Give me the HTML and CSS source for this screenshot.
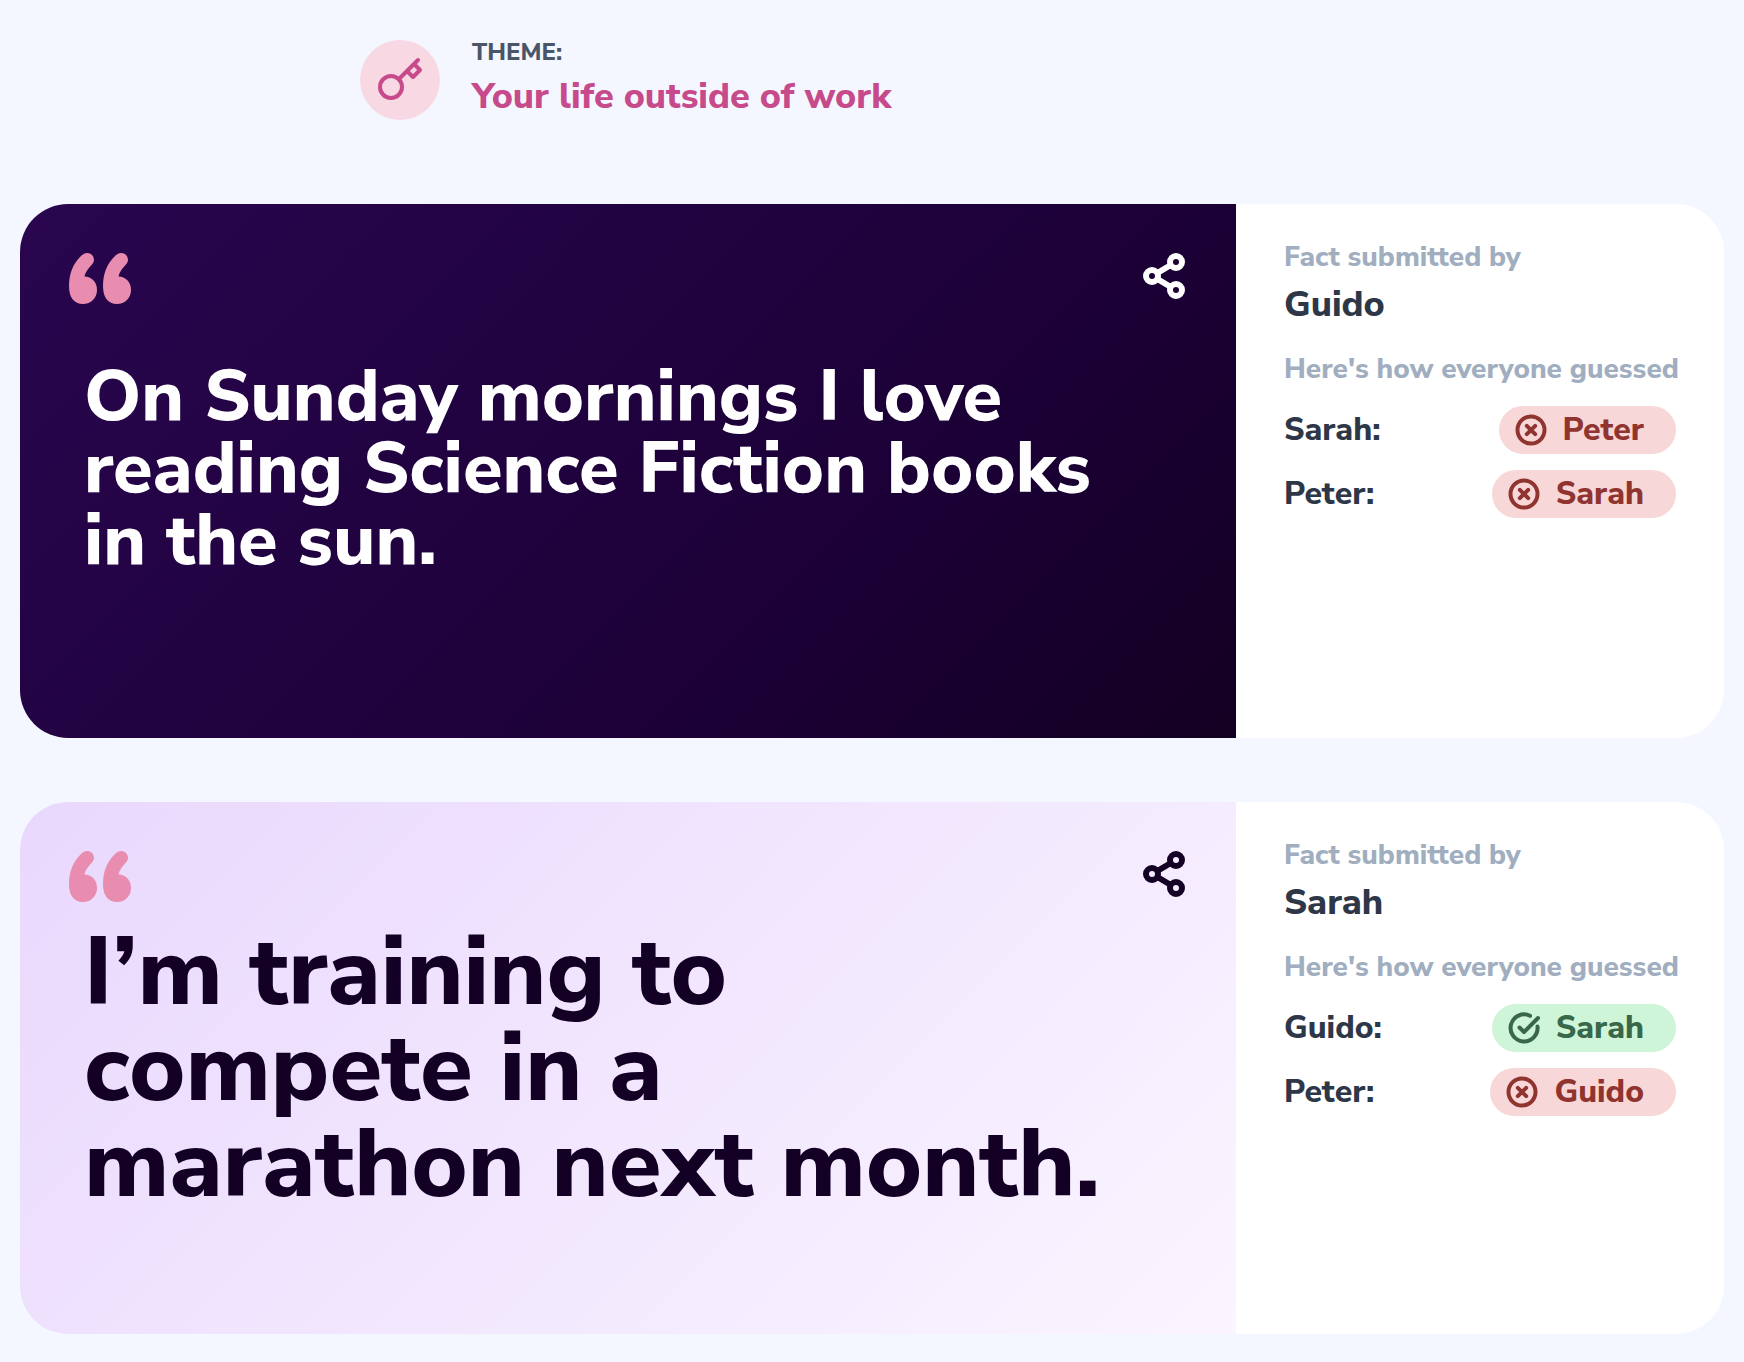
FILE: index.html
```html
<!DOCTYPE html>
<html lang="en">
<head>
<meta charset="utf-8">
<title>Facts</title>
<link rel="stylesheet" href="styles.css">
</head>
<body>
<svg class="sprite" aria-hidden="true">
  <symbol id="quote" viewBox="0 0 62 51">
    <path id="mark" d="M18 0C22 0 25 3 25 7C25 9 24 10 22.500 12C19 16 16.500 19 15.500 23.500C22.500 23.500 28 29 28 37C28 45 22 51 14 51C5 51 0 44.500 0 33C0 20 4 11 12 3C14 1 16 0 18 0Z"/>
    <use href="#mark" x="34"/>
  </symbol>
  <symbol id="share" viewBox="0 0 48 48">
    <path d="M19 20 30 13.500M19 28 30 34.500"/>
    <circle cx="12" cy="24" r="6"/><circle cx="36" cy="10" r="6"/><circle cx="36" cy="38" r="6"/>
  </symbol>
  <symbol id="wrong" viewBox="0 0 32 32">
    <circle cx="16" cy="16" r="13.500"/><path d="m11.800 11.800 8.400 8.400m0-8.400-8.400 8.400"/>
  </symbol>
  <symbol id="right" viewBox="0 0 32 32">
    <path d="M22 3.800A13.500 13.500 0 1 0 29.500 14.500M11.500 15.500 16 20 30 6"/>
  </symbol>
</svg>
<header class="theme">
  <span class="theme-icon">
    <svg viewBox="0 0 48 48" aria-hidden="true"><circle cx="15" cy="31" r="11"/><path d="M23 23 42 4M38 8 44 14 37 21 31 15"/></svg>
  </span>
  <div>
    <p class="theme-label">THEME:</p>
    <h1 class="theme-title">Your life outside of work</h1>
  </div>
</header>
<main class="facts">
  <article class="card">
    <section class="fact fact-dark">
      <div class="fact-bar">
        <svg class="quote" aria-hidden="true"><use href="#quote"/></svg>
        <button class="share" aria-label="Share"><svg aria-hidden="true"><use href="#share"/></svg></button>
      </div>
      <blockquote class="text-long">On Sunday mornings I love reading Science Fiction books in the sun.</blockquote>
    </section>
    <aside class="results">
      <p class="label">Fact submitted by</p>
      <p class="author">Guido</p>
      <p class="label">Here's how everyone guessed</p>
      <ul class="guesses">
        <li class="guess"><span>Sarah:</span><span class="pill pill-wrong"><svg aria-hidden="true"><use href="#wrong"/></svg>Peter</span></li>
        <li class="guess"><span>Peter:</span><span class="pill pill-wrong"><svg aria-hidden="true"><use href="#wrong"/></svg>Sarah</span></li>
      </ul>
    </aside>
  </article>
  <article class="card">
    <section class="fact fact-light">
      <div class="fact-bar">
        <svg class="quote" aria-hidden="true"><use href="#quote"/></svg>
        <button class="share" aria-label="Share"><svg aria-hidden="true"><use href="#share"/></svg></button>
      </div>
      <blockquote class="text-short">I’m training to compete in a marathon next month.</blockquote>
    </section>
    <aside class="results">
      <p class="label">Fact submitted by</p>
      <p class="author">Sarah</p>
      <p class="label">Here's how everyone guessed</p>
      <ul class="guesses">
        <li class="guess"><span>Guido:</span><span class="pill pill-right"><svg aria-hidden="true"><use href="#right"/></svg>Sarah</span></li>
        <li class="guess"><span>Peter:</span><span class="pill pill-wrong"><svg aria-hidden="true"><use href="#wrong"/></svg>Guido</span></li>
      </ul>
    </aside>
  </article>
</main>
</body>
</html>
```
FILE: styles.css
```css
* { box-sizing: border-box; margin: 0; padding: 0; }

body {
  background: #f4f7ff;
  color: #2d3748;
  font-family: "Nunito Sans", Nunito, Lato, "Noto Sans", sans-serif;
  font-weight: 800;
}

svg { display: block; fill: none; stroke: currentColor; stroke-linecap: round; stroke-linejoin: round; }
.sprite { position: absolute; width: 0; height: 0; }

.theme {
  display: flex;
  gap: 32px;
  width: 100%;
  max-width: 1024px;
  margin: 0 auto;
  padding-top: 40px;
  color: #c74b8b;
}
.theme-icon {
  display: grid;
  place-items: center;
  width: 80px;
  height: 80px;
  border-radius: 50%;
  background: #f8d8e3;
}
.theme-icon svg { width: 48px; height: 48px; stroke-width: 4; }
.theme-label { font-size: 24px; line-height: 24px; color: #4a5568; }
.theme-title { font-size: 36px; line-height: 48px; font-weight: 800; margin-top: 9px; }

.facts {
  display: flex;
  flex-direction: column;
  gap: 64px;
  padding: 83px 20px 28px;
}
.card {
  display: flex;
  border-radius: 48px;
  overflow: hidden;
  background: #fff;
}
.fact { flex: 1; padding: 48px; }
.fact-dark { color: #fff; background: linear-gradient(135deg, #29064f, #1b0035 70%, #130022); }
.fact-light { color: #130024; background: linear-gradient(135deg, #e9d8fd, #faf5ff); }
.fact-bar { display: flex; justify-content: space-between; height: 52px; }
.quote { width: 64px; height: 53px; padding: 1px; fill: #e88cb0; stroke: none; }
.share { width: 48px; height: 48px; border: 0; background: none; color: inherit; cursor: pointer; }
.share svg { width: 48px; height: 48px; stroke-width: 6; }
.text-long { font-size: 72px; line-height: 72px; padding: 56px 64px 114px 16px; }
.text-short { font-size: 96px; line-height: 96px; padding: 23px 64px 73px 16px; }

.results { width: 488px; padding: 35px 44px 36px 48px; }
.label { font-size: 28px; line-height: 36px; color: #a0aec0; white-space: nowrap; }
.author { font-size: 36px; line-height: 48px; margin: 6px 0 22px; }
.guesses { display: grid; gap: 16px; margin: 19px 4px 0 0; list-style: none; font-size: 32px; line-height: 48px; }
.guess { display: flex; justify-content: space-between; }
.pill { display: flex; align-items: center; gap: 16px; padding: 0 32px 0 16px; border-radius: 24px; }
.pill svg { width: 32px; height: 32px; stroke-width: 4; }
.pill-wrong { color: #903430; background: #f8d7d8; }
.pill-right { color: #386749; background: #cff5d8; }
```
